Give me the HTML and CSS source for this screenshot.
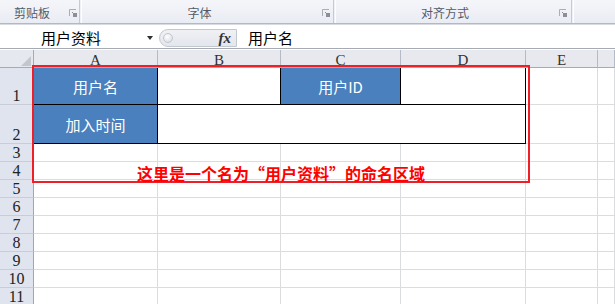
FILE: index.html
```html
<!DOCTYPE html>
<html lang="zh-CN">
<head>
<meta charset="utf-8">
<title>命名区域</title>
<link rel="stylesheet" href="styles.css">
</head>
<body>
<div class="app">
  <div class="ribbon">
    <div class="group g1">
      <span class="glabel">剪贴板</span>
      <svg class="launcher" width="8" height="8" viewBox="0 0 8 8"><path d="M0.5 7V0.5H7" fill="none" stroke="#a9adb6"/><path d="M3 3L6.5 6.5" stroke="#8a8f99"/><rect x="4" y="4" width="4" height="4" fill="#8a8f99"/></svg>
    </div>
    <div class="sep"></div>
    <div class="group g2">
      <span class="glabel">字体</span>
      <svg class="launcher" width="8" height="8" viewBox="0 0 8 8"><path d="M0.5 7V0.5H7" fill="none" stroke="#a9adb6"/><path d="M3 3L6.5 6.5" stroke="#8a8f99"/><rect x="4" y="4" width="4" height="4" fill="#8a8f99"/></svg>
    </div>
    <div class="sep"></div>
    <div class="group g3">
      <span class="glabel">对齐方式</span>
      <svg class="launcher" width="8" height="8" viewBox="0 0 8 8"><path d="M0.5 7V0.5H7" fill="none" stroke="#a9adb6"/><path d="M3 3L6.5 6.5" stroke="#8a8f99"/><rect x="4" y="4" width="4" height="4" fill="#8a8f99"/></svg>
    </div>
    <div class="sep"></div>
    <div class="group g4"></div>
  </div>

  <div class="fbar">
    <div class="namebox"><span class="nb-text">用户资料</span><span class="nb-arrow"></span></div>
    <div class="grip"><span class="knob"></span><span class="fx">fx</span></div>
    <div class="finput">用户名</div>
  </div>

  <div class="sheet">
    <div class="corner"><span class="corner-tri"></span></div>
    <div class="ch">A</div><div class="ch">B</div><div class="ch">C</div><div class="ch">D</div><div class="ch">E</div><div class="ch"></div>

    <div class="rh">1</div>
    <div class="c lbl">用户名</div><div class="c tb"></div><div class="c lbl">用户ID</div><div class="c tb"></div><div class="c"></div><div class="c"></div>

    <div class="rh">2</div>
    <div class="c lbl">加入时间</div><div class="c tb span3"></div><div class="c"></div><div class="c"></div>

    <div class="rh">3</div><div class="c"></div><div class="c"></div><div class="c"></div><div class="c"></div><div class="c"></div><div class="c"></div>
    <div class="rh">4</div><div class="c"></div><div class="c"></div><div class="c"></div><div class="c"></div><div class="c"></div><div class="c"></div>
    <div class="rh">5</div><div class="c"></div><div class="c"></div><div class="c"></div><div class="c"></div><div class="c"></div><div class="c"></div>
    <div class="rh">6</div><div class="c"></div><div class="c"></div><div class="c"></div><div class="c"></div><div class="c"></div><div class="c"></div>
    <div class="rh">7</div><div class="c"></div><div class="c"></div><div class="c"></div><div class="c"></div><div class="c"></div><div class="c"></div>
    <div class="rh">8</div><div class="c"></div><div class="c"></div><div class="c"></div><div class="c"></div><div class="c"></div><div class="c"></div>
    <div class="rh">9</div><div class="c"></div><div class="c"></div><div class="c"></div><div class="c"></div><div class="c"></div><div class="c"></div>
    <div class="rh">10</div><div class="c"></div><div class="c"></div><div class="c"></div><div class="c"></div><div class="c"></div><div class="c"></div>
    <div class="rh">11</div><div class="c"></div><div class="c"></div><div class="c"></div><div class="c"></div><div class="c"></div><div class="c"></div>

    <div class="note"><span class="note-text">这里是一个名为“用户资料”的命名区域</span></div>
  </div>
</div>
</body>
</html>
```

FILE: styles.css
```css
* { box-sizing: border-box; }
html, body { margin: 0; padding: 0; background: #fff; }
body {
  width: 615px;
  height: 304px;
  overflow: hidden;
  font-family: "Noto Sans CJK SC", "Noto Sans", sans-serif;
  color: #000;
}
.app { width: 615px; height: 304px; overflow: hidden; }

/* Ribbon group labels */
.ribbon {
  display: flex;
  height: 24px;
  background: linear-gradient(#f5f6fa, #e9ecf3);
  border-bottom: 1px solid #b4b8c1;
}
.group { display: flex; align-items: center; height: 23px; }
.glabel {
  flex: 1;
  text-align: center;
  font-size: 12px;
  line-height: 12px;
  color: #535b69;
  padding-top: 2px;
}
.launcher { flex: none; margin-left: 5px; margin-top: 2px; }
.g1 { width: 79px; }
.g1 .launcher { margin-right: 2px; }
.g2 { width: 251px; }
.g2 .launcher { margin-right: 3px; }
.g3 { width: 235px; }
.g3 .launcher { margin-right: 4px; }
.g4 { flex: 1; }
.sep {
  width: 3px;
  height: 23px;
  border-left: 1px solid #c6cad3;
  border-right: 1px solid #fdfdfe;
  background: #eef0f5;
}

/* Formula bar */
.fbar {
  display: flex;
  height: 25px;
  border-top: 1px solid #d8dbe1;
  border-bottom: 1px solid #a6aab3;
  margin-bottom: 1px;
  background: #fff;
}
.namebox { width: 159px; display: flex; align-items: center; }
.nb-text {
  width: 142px;
  text-align: center;
  font-size: 15px;
  line-height: 15px;
  padding-top: 1px;
}
.nb-arrow {
  margin-left: 5px;
  width: 0;
  height: 0;
  border-left: 3.5px solid transparent;
  border-right: 3.5px solid transparent;
  border-top: 4px solid #2e2e2e;
  margin-top: 2px;
}
.grip {
  width: 78px;
  height: 18px;
  margin-top: 4px;
  display: flex;
  align-items: center;
  border: 1px solid #c3c7cf;
  border-radius: 9px 0 0 9px;
  background: linear-gradient(#f0f1f5, #e3e6ec);
}
.knob {
  width: 10px;
  height: 10px;
  margin-left: 3px;
  border-radius: 50%;
  border: 1px solid #c3c7cf;
  background: radial-gradient(circle at 40% 35%, #ffffff, #d4d7de);
}
.fx {
  margin-left: auto;
  margin-right: 5px;
  font-family: "Liberation Serif", serif;
  font-style: italic;
  font-weight: bold;
  font-size: 15px;
  line-height: 15px;
  color: #333;
}
.finput {
  flex: 1;
  padding-left: 11px;
  font-size: 15px;
  line-height: 23px;
  padding-top: 1px;
}

/* Sheet grid */
.sheet {
  position: relative;
  display: grid;
  grid-template-columns: 34px 124px 123px 120px 125px 72px 1fr;
  grid-template-rows: 18px 37px 39px;
  grid-auto-rows: 18px;
}
.corner {
  background: #e6e8ef;
  border-right: 1px solid #a3abbb;
  border-bottom: 1px solid #a3abbb;
  display: flex;
  justify-content: flex-end;
  align-items: flex-end;
  padding: 0 2px 1px 0;
}
.corner-tri {
  width: 0;
  height: 0;
  border-left: 10px solid transparent;
  border-bottom: 10px solid #c2c6cf;
}
.ch {
  background: #e8e9ef;
  border-right: 1px solid #b4bac6;
  border-bottom: 1px solid #a3abbb;
  display: flex;
  justify-content: center;
  align-items: flex-end;
  font-family: "Liberation Serif", serif;
  font-size: 15px;
  line-height: 14px;
  color: #333;
}
.rh {
  background: #e0e4ee;
  border-right: 1px solid #9ea8bb;
  border-bottom: 1px solid #c8cdd8;
  display: flex;
  justify-content: center;
  align-items: flex-end;
  font-family: "Liberation Serif", serif;
  font-size: 16px;
  line-height: 14px;
  padding-bottom: 1px;
  color: #222;
}
.c {
  border-right: 1px solid #dadcdd;
  border-bottom: 1px solid #dadcdd;
}
.tb { border-color: #000; }
.lbl {
  border-color: #000;
  background: #4a80bd;
  color: #fff;
  font-size: 15px;
  display: flex;
  align-items: center;
  justify-content: center;
}
.span3 { grid-column: span 3; }

/* Annotation overlay */
.note {
  position: absolute;
  left: 32px;
  top: 15px;
  width: 498px;
  height: 118px;
  border: 2px solid #ee1f27;
  display: flex;
  flex-direction: column;
  justify-content: flex-end;
  align-items: center;
}
.note-text {
  font-size: 16px;
  line-height: 16px;
  font-weight: bold;
  color: #ff0000;
}
```
